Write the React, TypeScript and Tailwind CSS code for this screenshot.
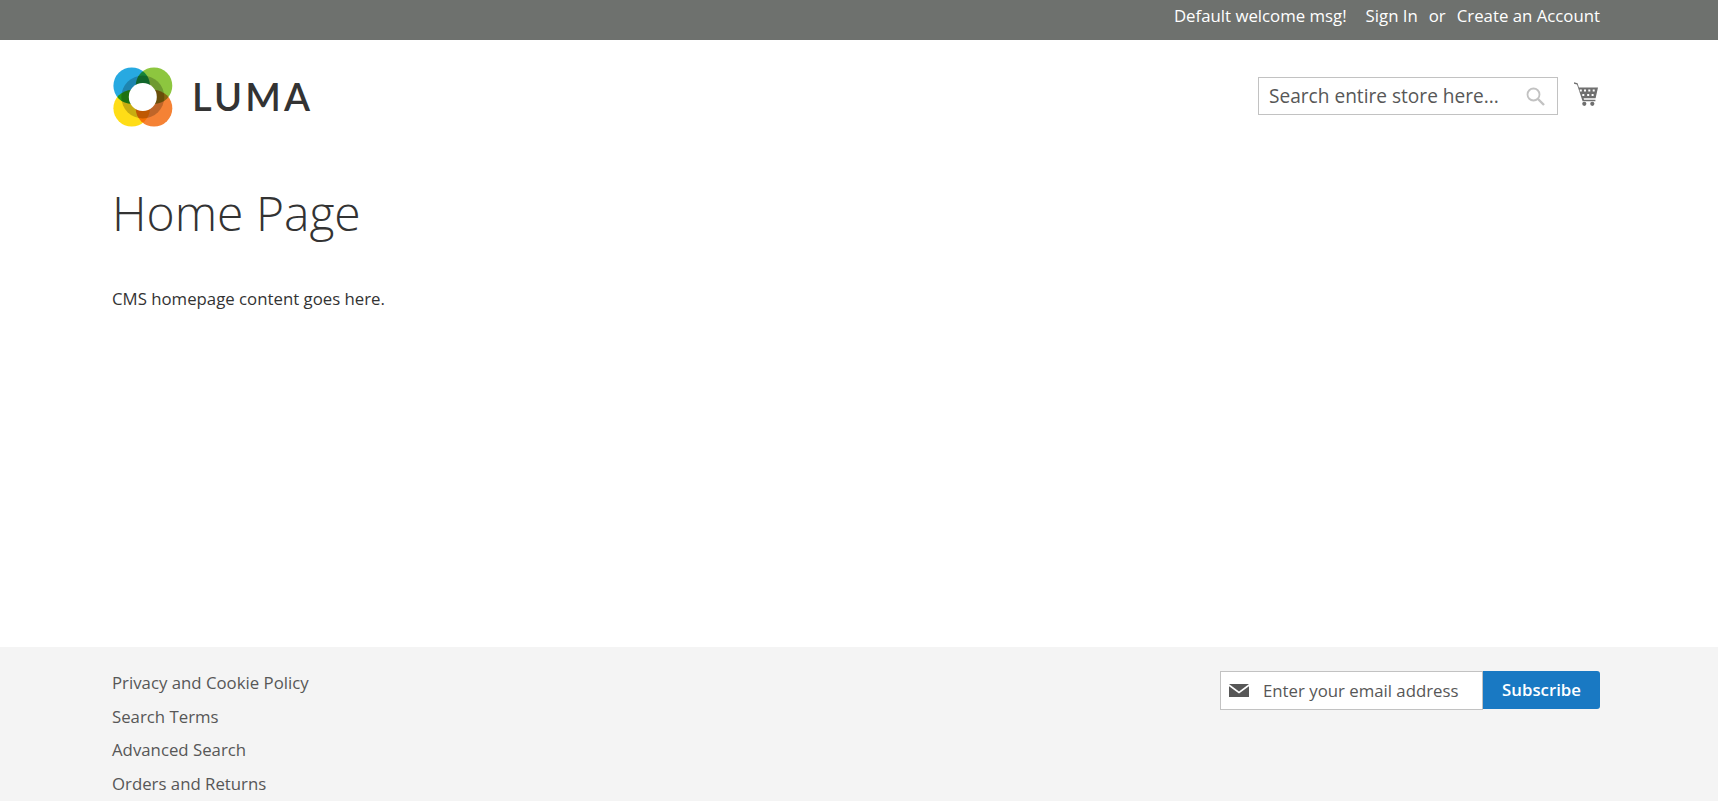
export default function App() {
  return (
    <div className="h-[801px] overflow-hidden flex flex-col bg-white text-[16.8px] text-[#333] font-['Open_Sans',sans-serif]">
      {/* Top bar */}
      <div className="h-10 shrink-0 bg-[#6e716e] text-white">
        <div className="mx-[118px] h-full flex items-center justify-end leading-[32px] pb-[9px]">
          <span className="mr-[19px]">Default welcome msg!</span>
          <a className="mr-[11px]">Sign In</a>
          <span className="mr-[11px]">or</span>
          <a>Create an Account</a>
        </div>
      </div>

      {/* Header */}
      <header className="h-[110px] shrink-0 mx-[112px] pr-[8px] flex justify-between">
        <div className="flex items-start pt-[24px]">
          <svg width="63" height="63" viewBox="0 0 63 63" className="isolate">
            <circle cx="19.7" cy="21.7" r="18.3" fill="#27a9e1" className="mix-blend-multiply" />
            <circle cx="42" cy="21.7" r="18.3" fill="#8dc63f" className="mix-blend-multiply" />
            <circle cx="19.7" cy="44.3" r="18.3" fill="#ffdd17" className="mix-blend-multiply" />
            <circle cx="42" cy="44.3" r="18.3" fill="#f58235" className="mix-blend-multiply" />
            <circle cx="30.8" cy="33" r="21.5" fill="#000" opacity="0.22" />
            <circle cx="30.8" cy="33" r="14" fill="#fff" />
          </svg>
          <span className="ml-[17px] mt-[9px] text-[38px] leading-[46px] font-semibold tracking-[3.2px] text-[#333] font-['Lato',sans-serif]">
            LUMA
          </span>
        </div>
        <div className="flex items-start pt-[37px]">
          <div className="w-[300px] h-[38px] border border-[#c2c2c2] flex items-center pl-[10px] pr-[12px] justify-between">
            <span className="text-[#575757] text-[19.1px] whitespace-nowrap">Search entire store here...</span>
            <svg width="19" height="19" viewBox="0 0 19 19" fill="none" stroke="#c2c2c2" strokeWidth="1.8">
              <circle cx="7.5" cy="7.5" r="6" />
              <path d="M12 12l6 6" strokeWidth="2.4" />
            </svg>
          </div>
          <svg width="24" height="24" viewBox="0 0 24 24" className="ml-[16px] mt-[5px]" fill="#6f6f6f">
            <path d="M0 .2l3.6 1 1.3 4.2H24l-2.4 10.8H9.6l.4 1.6h11.4v1.4H8.6L3 2.6 0 1.8z" />
            <circle cx="10.3" cy="21.8" r="2.1" />
            <circle cx="18.3" cy="21.8" r="2.1" />
            <path d="M5.8 7.6h2v2h-2zM10 7.6h2v2h-2zM14.3 7.6h2v2h-2zM18.7 7.6h2v2h-2zM8.3 12h2v2h-2zM13.2 12h2v2h-2zM17.6 12h2v2h-2z" fill="#fff" />
          </svg>
        </div>
      </header>

      {/* Main */}
      <main className="flex-1 mx-[112px]">
        <h1 className="mt-[34px] text-[48px] leading-[58px] font-light text-[#333]">Home Page</h1>
        <p className="mt-[45px] leading-[24px]">CMS homepage content goes here.</p>
      </main>

      {/* Footer */}
      <footer className="h-[154px] shrink-0 bg-[#f4f4f4] pl-[112px] pr-[118px] flex justify-between text-[#575757]">
        <ul className="pt-[24px] flex flex-col gap-[10.5px] leading-[23px]">
          <li>Privacy and Cookie Policy</li>
          <li>Search Terms</li>
          <li>Advanced Search</li>
          <li>Orders and Returns</li>
        </ul>
        <div className="pt-[24px] flex items-start">
          <div className="w-[263px] h-[39px] bg-white border border-[#c2c2c2] flex items-center">
            <svg width="20" height="13" viewBox="0 0 20 13" className="ml-[8px] mr-[14px]" fill="#575757">
              <path d="M0 0h20L10 7.5z" />
              <path d="M0 2.2l10 7.3 10-7.3V13H0z" />
            </svg>
            <span className="text-[#575757] whitespace-nowrap">Enter your email address</span>
          </div>
          <button className="w-[117px] h-[38px] bg-[#1979c3] text-white font-semibold rounded-r-[3px]">Subscribe</button>
        </div>
      </footer>
    </div>
  );
}
